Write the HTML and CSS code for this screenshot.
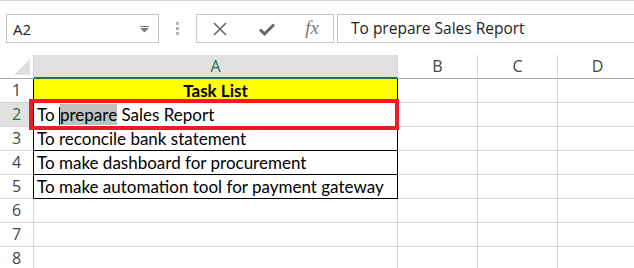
FILE: index.html
```html
<!DOCTYPE html>
<html lang="en">
<head>
    <meta charset="UTF-8">
    <title>Task List</title>
    <link rel="stylesheet" href="styles.css">
</head>
<body>

<div class="formula-bar">
    <div class="name-box">
        <span>A2</span>
        <svg class="drop" width="9" height="7" viewBox="0 0 9 7">
            <rect x="0" y="0" width="9" height="1" fill="#7a7a7a"/>
            <path d="M0 2 L9 2 L4.5 6.5 Z" fill="#7a7a7a"/>
        </svg>
    </div>
    <div class="grip">
        <i></i><i></i><i></i>
    </div>
    <div class="fx-box">
        <svg class="icon" width="16" height="16" viewBox="0 0 16 16">
            <path d="M2 2 L14 14 M14 2 L2 14" stroke="#666" stroke-width="1.6" fill="none"/>
        </svg>
        <svg class="icon" width="18" height="16" viewBox="0 0 18 16">
            <path d="M2 8.5 L6.5 13 L16 3.5" stroke="#666" stroke-width="3" fill="none"/>
        </svg>
        <span class="fx">fx</span>
    </div>
    <div class="formula-input">To prepare Sales Report</div>
</div>

<div class="sheet">
    <div class="corner"><div class="tri"></div></div>
    <div class="col-head active">A</div>
    <div class="col-head">B</div>
    <div class="col-head">C</div>
    <div class="col-head">D</div>

    <div class="row-head edge">1</div>
    <div class="cell a title">Task List</div>
    <div class="cell"></div><div class="cell"></div><div class="cell"></div>

    <div class="row-head edge active">2</div>
    <div class="cell a">To <span class="caret"></span><span class="sel">prepare</span> Sales Report</div>
    <div class="cell"></div><div class="cell"></div><div class="cell"></div>

    <div class="row-head edge">3</div>
    <div class="cell a">To reconcile bank statement</div>
    <div class="cell"></div><div class="cell"></div><div class="cell"></div>

    <div class="row-head edge">4</div>
    <div class="cell a">To make dashboard for procurement</div>
    <div class="cell"></div><div class="cell"></div><div class="cell"></div>

    <div class="row-head edge">5</div>
    <div class="cell a">To make automation tool for payment gateway</div>
    <div class="cell"></div><div class="cell"></div><div class="cell"></div>

    <div class="row-head">6</div>
    <div class="cell"></div><div class="cell"></div><div class="cell"></div><div class="cell"></div>

    <div class="row-head">7</div>
    <div class="cell"></div><div class="cell"></div><div class="cell"></div><div class="cell"></div>

    <div class="row-head">8</div>
    <div class="cell"></div><div class="cell"></div><div class="cell"></div><div class="cell"></div>

    <!-- red box around A2 -->
    <div class="mark"></div>
</div>

</body>
</html>
```

FILE: styles.css
```css
body {
    margin: 0;
    padding: 0;
    background-color: #fff;
    font-family: "Open Sans", sans-serif;
    overflow: hidden;
}
.formula-bar {
    display: flex;
    align-items: stretch;
    height: 55px;
    box-sizing: border-box;
    padding-top: 13px;
    border-top: 1px solid #d4d4d4;
}
.formula-bar > div {
    height: 29px;
    box-sizing: border-box;
}
.name-box {
    margin-left: 6px;
    width: 153px;
    border: 1px solid #c6c6c6;
    display: flex;
    align-items: center;
    justify-content: space-between;
    padding: 0 9px 0 6px;
    font-size: 15px;
    color: #222;
}
.drop {
    margin-top: 1px;
}
.grip {
    width: 37px;
    display: flex;
    flex-direction: column;
    align-items: center;
    justify-content: center;
    gap: 2px;
}
.grip i {
    display: block;
    width: 3px;
    height: 3px;
    background-color: #b4b4b4;
}
.fx-box {
    width: 138px;
    border: 1px solid #c6c6c6;
    display: flex;
    align-items: center;
    justify-content: space-between;
    padding: 0 14px 0 15px;
}
.fx {
    font-family: "Liberation Serif", serif;
    font-style: italic;
    font-size: 19px;
    color: #777;
    margin-bottom: 2px;
}
.formula-input {
    flex: 1;
    margin-left: 3px;
    border: 1px solid #c6c6c6;
    border-right: none;
    padding-left: 13px;
    font-size: 15.5px;
    line-height: 27px;
    color: #222;
}
.sheet {
    position: relative;
    display: grid;
    grid-template-columns: 34px 364px 80px 80px 80px;
    grid-template-rows: 24px repeat(8, 24px);
}
.sheet > div {
    box-sizing: border-box;
}
.corner {
    border-right: 1px solid #d4d4d4;
    border-bottom: 1px solid #ababab;
    position: relative;
}
.tri {
    position: absolute;
    right: 3px;
    bottom: 3px;
    width: 0;
    height: 0;
    border-left: 16px solid transparent;
    border-bottom: 16px solid #dfdfdf;
}
.col-head {
    border-right: 1px solid #d4d4d4;
    border-bottom: 1px solid #ababab;
    text-align: center;
    font-size: 16px;
    line-height: 22px;
    color: #444;
}
.col-head.active {
    background-color: #e1e1e1;
    border-bottom: 2px solid #217346;
    color: #217346;
}
.row-head {
    border-right: 1px solid #d4d4d4;
    border-bottom: 1px solid #d4d4d4;
    text-align: center;
    font-size: 16px;
    line-height: 23px;
    color: #444;
}
.row-head.edge {
    border-right-color: #000;
}
.row-head.active {
    background-color: #e1e1e1;
    color: #217346;
}
.cell {
    border-right: 1px solid #d4d4d4;
    border-bottom: 1px solid #d4d4d4;
    font-family: "Lato", sans-serif;
    font-size: 17px;
    line-height: 23px;
    padding-left: 3px;
    white-space: nowrap;
    color: #000;
}
.cell.a {
    border-right-color: #000;
    border-bottom-color: #000;
}
.cell.title {
    background-color: #ffff00;
    font-weight: bold;
    text-align: center;
    padding-left: 0;
}
.sel {
    background-color: #c0c0c0;
}
.caret {
    display: inline-block;
    width: 1px;
    height: 18px;
    vertical-align: -4px;
    background-color: #000;
}
.mark {
    position: absolute;
    left: 29px;
    top: 44px;
    width: 370px;
    height: 31px;
    border: 4px solid #ed1c24;
}
```
